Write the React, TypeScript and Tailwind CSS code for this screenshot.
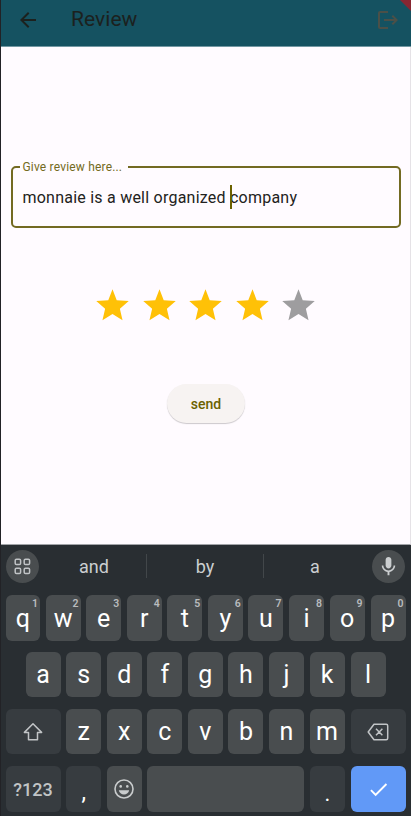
import React from "react";

const STAR = "M12 17.27 18.18 21l-1.64-7.03L22 9.24l-7.4-.5L12 2 9.4 8.74 2 9.24l5.46 4.73L5.82 21z";

function Letter({ ch, hint }: { ch: string; hint?: string }) {
  return (
    <div className="relative flex h-full w-[35px] shrink-0 items-center justify-center rounded-[6px] bg-[#494d4f] text-[25px] leading-none text-white last:ml-[0.5px]">
      <span>{ch}</span>
      {hint && (
        <span className="absolute top-[3.5px] right-[2px] text-[10.5px] leading-none font-semibold text-[#b9bcbe]">{hint}</span>
      )}
    </div>
  );
}

function AppBar() {
  return (
    <header className="relative flex h-[47px] items-start overflow-hidden border-b border-[#7398a3] bg-[#155261]">
      <svg className="mt-[7.5px] ml-[15px] h-6 w-6" viewBox="0 0 24 24" fill="#1c211e">
        <path d="M20 11H7.83l5.59-5.59L12 4l-8 8 8 8 1.41-1.41L7.83 13H20z" />
      </svg>
      <h1 className="mt-[5px] ml-[31px] text-[21px] leading-[28px] tracking-[0.05px] text-[#1c211e]">Review</h1>
      <svg className="mt-[7.5px] mr-[11px] ml-auto h-6 w-6" viewBox="0 0 24 24" fill="#4b5048">
        <path d="M17 7l-1.41 1.41L18.17 11H8v2h10.17l-2.58 2.58L17 17l5-5zM4 5h8V3H4c-1.1 0-2 .9-2 2v14c0 1.1.9 2 2 2h8v-2H4z" />
      </svg>
      <svg className="absolute top-0 right-0 h-3 w-3" viewBox="0 0 12 12">
        <path d="M1 0H12V11Z" fill="#872632" />
      </svg>
    </header>
  );
}

function ReviewForm() {
  return (
    <main className="flex h-[498px] flex-col items-center border-r border-b border-r-[#e5e2e6] border-b-[#a2a4a8] bg-[#fffbff]">
      <div className="relative mt-[119px] mr-[-1px] flex h-[62px] w-[390px] items-center rounded-[5px] border-2 border-[#736a22] pl-[9.5px]">
        <span className="absolute -top-[9px] left-[6.5px] w-[108px] bg-[#fffbff] pl-[3px] text-[12px] leading-4 tracking-[0.18px] text-[#736a22]">
          Give review here...
        </span>
        <p className="mt-[2px] flex items-center text-[16px] leading-6 tracking-[0.23px] whitespace-pre text-[#222220]">
          <span>monnaie is a well organized </span>
          <span className="-mr-[2px] h-[24px] w-[2px] -translate-y-px bg-[#6b6100]" />
          <span>company</span>
        </p>
      </div>
      <div className="mt-[58px] flex gap-[7.5px]">
        {[1, 2, 3, 4, 5].map((n) => (
          <svg key={n} className="h-[39px] w-[39px]" viewBox="0 0 24 24" fill={n < 5 ? "#ffc107" : "#9e9d9f"}>
            <path d={STAR} />
          </svg>
        ))}
      </div>
      <button className="mt-[59px] mr-[-1px] h-[39px] w-[78px] rounded-full bg-[#f7f3f2] pt-px text-[14px] font-medium text-[#6b6100] shadow-[0_1px_1px_rgba(0,0,0,0.2)]">
        send
      </button>
    </main>
  );
}

function Suggestions() {
  return (
    <div className="flex h-[42px] items-center pr-[5.6px] pl-[5px] text-[18px] text-[#cbced0]">
      <div className="flex h-[33px] w-[33px] items-center justify-center rounded-full bg-[#494d4f]">
        <svg className="h-[17px] w-[17px]" viewBox="0 0 17 17" fill="none" stroke="#c1c4c6" strokeWidth="1.5">
          <rect x="1.2" y="1.2" width="5.4" height="5.4" rx="1.3" />
          <rect x="10.2" y="1.2" width="5.4" height="5.4" rx="1.3" />
          <rect x="1.2" y="10.2" width="5.4" height="5.4" rx="1.3" />
          <rect x="10.2" y="10.2" width="5.4" height="5.4" rx="1.3" />
        </svg>
      </div>
      <span className="ml-[3px] w-[104px] text-center">and</span>
      <i className="h-6 w-px bg-[#42474a]" />
      <span className="w-[116px] text-center">by</span>
      <i className="h-6 w-px bg-[#42474a]" />
      <span className="w-[102px] text-center">a</span>
      <div className="ml-auto flex h-[33px] w-[33px] items-center justify-center rounded-full bg-[#494d4f]">
        <svg className="h-[23px] w-[23px]" viewBox="0 0 24 24" fill="#cbced0">
          <path d="M12 14c1.66 0 3-1.34 3-3V5c0-1.66-1.34-3-3-3S9 3.34 9 5v6c0 1.66 1.34 3 3 3zm5.3-3c0 3-2.54 5.1-5.3 5.1S6.7 14 6.7 11H5c0 3.41 2.72 6.23 6 6.72V21h2v-3.28c3.28-.48 6-3.3 6-6.72z" />
        </svg>
      </div>
    </div>
  );
}

function Keyboard() {
  const darkKey = "flex h-full shrink-0 items-center justify-center rounded-[6px] bg-[#373c40]";
  return (
    <section className="h-[271px] bg-[#292e32]">
      <Suggestions />
      <div className="mt-[8px] flex flex-col">
        <div className="flex h-[46px] gap-[5.57px] pl-[4.6px] [&>*:first-child]:w-[34.45px]">
          {"qwertyuiop".split("").map((c, i) => (
            <Letter key={c} ch={c} hint={String((i + 1) % 10)} />
          ))}
        </div>
        <div className="mt-[11px] flex h-[45px] gap-[5.57px] pl-[24.6px]">
          {"asdfghjkl".split("").map((c) => (
            <Letter key={c} ch={c} />
          ))}
        </div>
        <div className="mt-[12px] flex h-[45px] gap-[5.57px] pl-[4.6px]">
          <div className={`${darkKey} w-[55px]`}>
            <svg className="h-[20px] w-[20px]" viewBox="0 0 20 20" fill="none" stroke="#c1c4c6" strokeWidth="1.5" strokeLinejoin="round">
              <path d="M10 1.7 1.4 10.4H5.5V17.7H14.5V10.4H18.6Z" />
            </svg>
          </div>
          {"zxcvbnm".split("").map((c) => (
            <Letter key={c} ch={c} />
          ))}
          <div className={`${darkKey} ml-[0.5px] w-[55px]`}>
            <svg className="h-[18px] w-[22px]" viewBox="0 0 22 18" fill="none" stroke="#c1c4c6" strokeWidth="1.5" strokeLinejoin="round">
              <path d="M7 1.2H19.2Q20.7 1.2 20.7 2.7V15.3Q20.7 16.8 19.2 16.8H7L1.2 9ZM9 5.8l6.4 6.4M15.4 5.8 9 12.2" />
            </svg>
          </div>
        </div>
        <div className="mt-[12px] flex h-[46px] gap-[5.57px] pl-[4.6px]">
          <div className={`${darkKey} w-[55px] text-[18px] font-medium text-[#c1c4c6]`}>?123</div>
          <div className={`${darkKey} w-[35px] pt-[8px] text-[23px] text-white`}>,</div>
          <div className="flex w-[35px] items-center justify-center rounded-[6px] bg-[#494d4f]">
            <svg className="h-[20px] w-[20px]" viewBox="0 0 20 20" fill="none" stroke="#c9cccd" strokeWidth="1.6">
              <circle cx="10" cy="10" r="9" />
              <g fill="#c9cccd" stroke="none">
                <circle cx="6.7" cy="7.4" r="1.3" />
                <circle cx="13.3" cy="7.4" r="1.3" />
                <path d="M4.8 11.2H15.2C14.7 13.8 12.6 15.5 10 15.5S5.3 13.8 4.8 11.2Z" />
              </g>
            </svg>
          </div>
          <div className="w-[157px] rounded-[6px] bg-[#494d4f]" />
          <div className={`${darkKey} w-[35px] pt-[8px] text-[22px] text-white`}>.</div>
          <div className="ml-[0.5px] flex w-[55.5px] items-center justify-center rounded-[6px] bg-[#6199f7]">
            <svg className="h-[23px] w-[23px]" viewBox="0 0 24 24" fill="white">
              <path d="M9 16.17 4.83 12l-1.42 1.41L9 19 21 7l-1.41-1.41z" />
            </svg>
          </div>
        </div>
      </div>
    </section>
  );
}

export default function App() {
  return (
    <div className="h-[816px] w-[411px] overflow-hidden border-l border-[#222226] font-['Roboto',sans-serif]">
      <AppBar />
      <ReviewForm />
      <Keyboard />
    </div>
  );
}
